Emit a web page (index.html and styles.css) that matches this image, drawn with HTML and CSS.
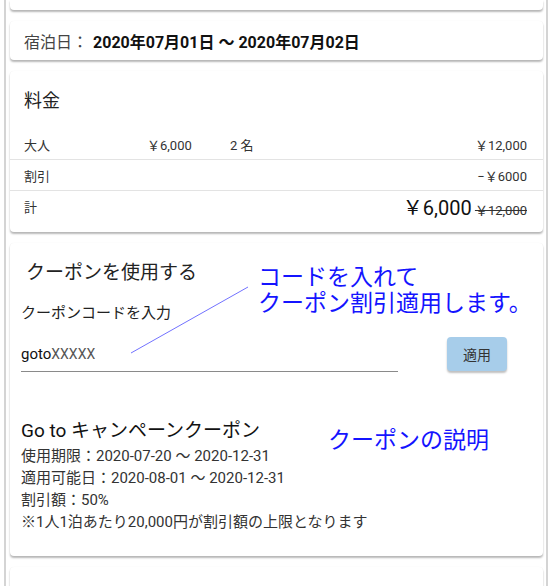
FILE: index.html
```html
<!DOCTYPE html>
<html lang="ja">

<head>
    <meta charset="UTF-8">
    <meta name="viewport" content="width=device-width, initial-scale=1.0">
    <title>予約確認</title>
    <link rel="stylesheet" href="styles.css">
</head>

<body>
    <div class="frame">
        <div class="card card-cut"></div>

        <!-- stay dates -->
        <div class="card stay">
            <span class="stay-label">宿泊日：</span>
            <span class="stay-dates">2020年07月01日 〜 2020年07月02日</span>
        </div>

        <!-- price -->
        <div class="card price">
            <h2 class="card-title">料金</h2>
            <div class="price-row">
                <span>大人</span>
                <span>￥6,000</span>
                <span>2&nbsp;名</span>
                <span class="amount">￥12,000</span>
            </div>
            <div class="price-row">
                <span>割引</span>
                <span></span>
                <span></span>
                <span class="amount">−￥6000</span>
            </div>
            <div class="price-row total">
                <span>計</span>
                <span></span>
                <span></span>
                <span class="amount"><span class="total-now">￥6,000</span> <s class="total-old">￥12,000</s></span>
            </div>
        </div>

        <!-- coupon -->
        <div class="card coupon">
            <h2 class="coupon-title">クーポンを使用する</h2>
            <p class="coupon-label">クーポンコードを入力</p>
            <div class="coupon-form">
                <div class="coupon-input">goto<span class="mask">XXXXX</span></div>
                <button type="button" class="apply-btn">適用</button>
            </div>

            <div class="coupon-info">
                <h3 class="info-title">Go to キャンペーンクーポン</h3>
                <p>使用期限：2020-07-20 〜 2020-12-31</p>
                <p>適用可能日：2020-08-01 〜 2020-12-31</p>
                <p>割引額：50%</p>
                <p>※1人1泊あたり20,000円が割引額の上限となります</p>
            </div>

            <!-- notes drawn over the card -->
            <svg class="note-line" width="130" height="80" viewBox="0 0 130 80">
                <line x1="3" y1="74" x2="120" y2="8" stroke="#7272ff" stroke-width="1" />
            </svg>
            <p class="note note-code">コードを入れて<br>クーポン割引適用します。</p>
            <p class="note note-info">クーポンの説明</p>
        </div>

        <div class="card card-next"></div>
    </div>
</body>

</html>
```

FILE: styles.css
```css
:root {
    --text: #222;
    --line: #e3e3e3;
    --note: #1414ff;
    --btn: #a7cdea;
}

* {
    margin: 0;
    padding: 0;
    box-sizing: border-box;
}

body {
    font-family: Roboto, "Noto Sans CJK JP", sans-serif;
    color: var(--text);
    background-color: #fff;
    height: 586px;
    overflow: hidden;
}

.frame {
    margin: 0 7px 0 4px;
    border-left: 2px solid #d4d4d4;
    border-right: 2px solid #d4d4d4;
    padding: 0 3px 0 4px;
    min-height: 586px;
    display: flex;
    flex-direction: column;
    gap: 11px;
}

.card {
    background-color: #fff;
    border-radius: 4px;
    box-shadow: 0 0 1px rgba(0, 0, 0, 0.08), 0 2px 2px rgba(0, 0, 0, 0.28);
    position: relative;
}

.card-cut {
    height: 10px;
    border-radius: 0 0 4px 4px;
}

.card-next {
    height: 40px;
}

/* stay */
.stay {
    height: 39px;
    padding: 0 14px;
    display: flex;
    align-items: center;
    font-size: 16px;
}

.stay-label {
    color: #444;
    margin-right: 5px;
}

.stay-dates {
    font-weight: bold;
    color: #111;
}

/* price */
.price {
    height: 161px;
    padding-top: 18px;
}

.card-title {
    font-size: 18px;
    font-weight: normal;
    line-height: 24px;
    padding: 0 14px;
    margin-bottom: 16px;
}

.price-row {
    display: grid;
    grid-template-columns: 123px 83px 1fr auto;
    align-items: center;
    height: 31px;
    padding: 0 16px 0 14px;
    font-size: 13px;
    color: #333;
    border-bottom: 1px solid var(--line);
}

.price-row.total {
    border-bottom: none;
}

.amount {
    text-align: right;
}

.total-now {
    font-size: 20px;
    color: #111;
}

.total-old {
    font-size: 13px;
    color: #333;
}

/* coupon */
.coupon {
    height: 313px;
    padding: 18px 11px 0;
}

.coupon-title {
    font-size: 19px;
    font-weight: normal;
    line-height: 24px;
    padding-left: 5px;
}

.coupon-label {
    font-size: 15px;
    line-height: 20px;
    margin-top: 18px;
}

.coupon-form {
    display: flex;
    align-items: flex-end;
    margin-top: 14px;
    height: 35px;
}

.coupon-input {
    width: 377px;
    height: 35px;
    font-size: 15px;
    line-height: 34px;
    border-bottom: 1px solid #8a8a8a;
    color: #111;
}

.mask {
    color: #555;
    font-size: 14px;
}

.apply-btn {
    width: 60px;
    height: 34px;
    margin-left: 49px;
    margin-bottom: 1px;
    border: none;
    border-radius: 4px;
    background-color: var(--btn);
    box-shadow: 0 2px 2px rgba(0, 0, 0, 0.25);
    font-family: inherit;
    font-size: 14px;
    color: #333;
}

.coupon-info {
    margin-top: 47px;
}

.info-title {
    font-size: 19px;
    font-weight: normal;
    line-height: 24px;
    color: #111;
    margin-bottom: 2px;
}

.coupon-info p {
    font-size: 15px;
    line-height: 22px;
    color: #333;
}

.note-line {
    position: absolute;
    left: 118px;
    top: 36px;
}

.note {
    position: absolute;
    color: var(--note);
    font-size: 23px;
    line-height: 26px;
}

.note-code {
    left: 248px;
    top: 22px;
}

.note-info {
    left: 318px;
    top: 185px;
}
```
